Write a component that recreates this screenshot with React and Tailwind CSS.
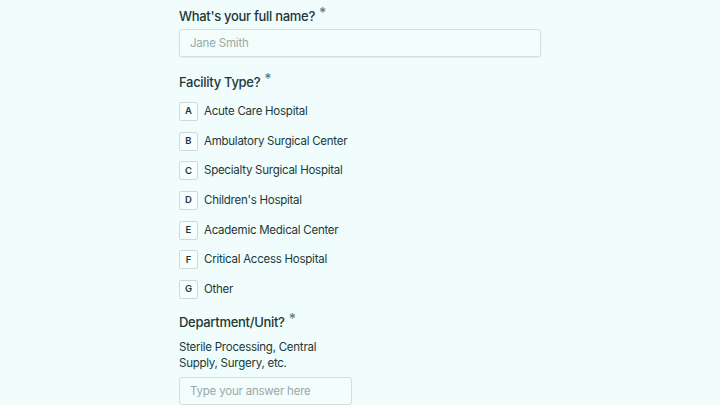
const options = [
  ['A', 'Acute Care Hospital'],
  ['B', 'Ambulatory Surgical Center'],
  ['C', 'Specialty Surgical Hospital'],
  ['D', "Children's Hospital"],
  ['E', 'Academic Medical Center'],
  ['F', 'Critical Access Hospital'],
  ['G', 'Other'],
];

function Label({ children }) {
  return (
    <div className="flex h-[20px] items-center text-[13px] font-medium tracking-[-0.3px] text-[#1c3838]">
      <span>{children}</span>
      <span className="ml-[4px] -mt-[9px] text-[14px] text-[#6a7d7d]">*</span>
    </div>
  );
}

export default function App() {
  return (
    <div
      className="h-[405px] w-[720px] overflow-hidden bg-[#f0fdfc]"
      style={{ fontFamily: 'Inter, "Noto Sans", sans-serif' }}
    >
      <div className="ml-[179px] w-[362px] pt-[7px]">
        <Label>What's your full name?</Label>
        <input
          className="mt-[2px] block h-[28px] w-full rounded-[3px] border border-[#d3dede] bg-[#f2fdfc] px-[10px] text-[11.5px] tracking-[-0.2px] text-[#1c3838] placeholder-[#9aa9a9] outline-none shadow-[0_1px_2px_rgba(0,0,0,0.06)]"
          placeholder="Jane Smith"
        />

        <div className="mt-[16px]">
          <Label>Facility Type?</Label>
        </div>
        <div className="mt-[9px] flex flex-col gap-[10.67px]">
          {options.map(([k, v]) => (
            <div key={k} className="flex h-[19px] items-center">
              <div className="flex h-[19px] w-[19px] items-center justify-center rounded-[2px] border border-[#ccdada] bg-[#f7fefe] text-[9.5px] font-semibold text-[#1c3838]">
                {k}
              </div>
              <span className="ml-[6px] text-[11.5px] tracking-[-0.25px] text-[#1c3838]">{v}</span>
            </div>
          ))}
        </div>

        <div className="mt-[14px]">
          <Label>Department/Unit?</Label>
        </div>
        <div className="mt-[6px] w-[140px] text-[11.5px] leading-[16px] tracking-[-0.25px] text-[#1c3838]">
          Sterile Processing, Central Supply, Surgery, etc.
        </div>
        <input
          className="mt-[6px] block h-[28px] w-[173px] rounded-[3px] border border-[#d3dede] bg-[#f2fdfc] px-[10px] text-[11.5px] tracking-[-0.2px] text-[#1c3838] placeholder-[#9aa9a9] outline-none"
          placeholder="Type your answer here"
        />
      </div>
    </div>
  );
}
